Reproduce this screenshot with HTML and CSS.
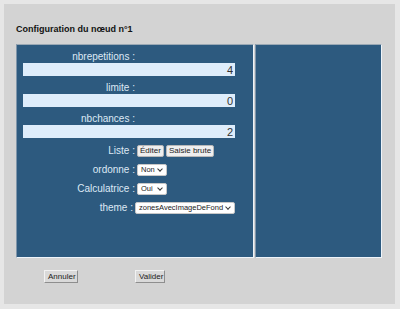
FILE: index.html
```html
<!DOCTYPE html>
<html lang="fr">
<head>
  <meta charset="UTF-8" />
  <title>Configuration du nœud n°1</title>
  <link rel="stylesheet" href="styles.css">
</head>
<body>
  <div class="window">
    <h1 class="title">Configuration du nœud n°1</h1>

    <div class="panels">
      <div class="panel panel-main">
        <div class="field">
          <label class="field-label" for="nbrepetitions">nbrepetitions :</label>
          <input class="num" type="text" id="nbrepetitions" value="4">
        </div>
        <div class="field">
          <label class="field-label" for="limite">limite :</label>
          <input class="num" type="text" id="limite" value="0">
        </div>
        <div class="field">
          <label class="field-label" for="nbchances">nbchances :</label>
          <input class="num" type="text" id="nbchances" value="2">
        </div>

        <div class="rows">
          <div class="row">
            <span class="row-label">Liste :</span>
            <button class="small-btn" type="button">Éditer</button>
            <button class="small-btn" type="button">Saisie brute</button>
          </div>
          <div class="row">
            <span class="row-label">ordonne :</span>
            <span class="select sel-short">Non <span class="chev"></span></span>
          </div>
          <div class="row">
            <span class="row-label">Calculatrice :</span>
            <span class="select sel-short">Oui <span class="chev"></span></span>
          </div>
          <div class="row">
            <span class="row-label">theme :</span>
            <span class="select sel-long">zonesAvecImageDeFond <span class="chev"></span></span>
          </div>
        </div>
      </div>
      <div class="panel panel-side"></div>
    </div>

    <div class="actions">
      <button class="action-btn btn-cancel" type="button">Annuler</button>
      <button class="action-btn btn-ok" type="button">Valider</button>
    </div>
  </div>
</body>
</html>
```

FILE: styles.css
```css
:root {
  --outer: #e6e6e6;
  --window: #d3d3d3;
  --blue: #2d5a7f;
  --label: #dde9f5;
  --input-bg: #deedfb;
  --font: 'Liberation Sans', Arial, sans-serif;
}
body {
  margin: 0;
  background: var(--outer);
  font-family: var(--font);
}
.window {
  margin: 4px;
  width: 391px;
  height: 300px;
  background: var(--window);
  box-sizing: border-box;
  padding: 19px 12px 0 12px;
}
.title {
  margin: 0 0 8px 0;
  font-size: 9px;
  line-height: 13px;
  font-weight: bold;
  color: #111;
}
.panels {
  display: flex;
  gap: 1px;
  height: 214px;
}
.panel {
  background: var(--blue);
  box-sizing: border-box;
  border: 1px solid;
  border-color: #9aa8b4 #eef4fa #eef4fa #7f95aa;
}
.panel-main {
  width: 238px;
  padding: 0 18px 0 6px;
}
.panel-side {
  width: 127px;
}
.field-label {
  display: block;
  width: 112px;
  text-align: right;
  color: var(--label);
  font-size: 10px;
  line-height: 13px;
  padding-top: 5px;
}
.num {
  display: block;
  width: 212px;
  height: 13px;
  box-sizing: border-box;
  margin: 0;
  border: 0;
  padding: 0 2px;
  background: var(--input-bg);
  text-align: right;
  font-family: var(--font);
  font-size: 11px;
  color: #333;
}
.rows {
  margin-top: 3px;
}
.row {
  display: flex;
  align-items: center;
  height: 19px;
}
.row-label {
  width: 112px;
  text-align: right;
  color: var(--label);
  font-size: 10px;
  margin-right: 2px;
}
.small-btn {
  height: 12px;
  padding: 0 2px;
  margin: 0 2px 0 0;
  font-family: var(--font);
  font-size: 8px;
  line-height: 10px;
  background: #efefef;
  color: #222;
  border: 1px solid #b8b8b8;
  border-radius: 2px;
}
.select {
  display: inline-flex;
  align-items: center;
  justify-content: space-between;
  box-sizing: border-box;
  height: 12px;
  padding: 0 3px;
  background: #fff;
  border: 1px solid #c7c7c7;
  border-radius: 2px;
  font-size: 7.5px;
  color: #222;
}
.sel-short {
  width: 30px;
}
.sel-long {
  width: 100px;
}
.chev {
  display: inline-block;
  width: 3px;
  height: 3px;
  border-right: 1px solid #333;
  border-bottom: 1px solid #333;
  transform: rotate(45deg);
  margin: 0 1px 2px 3px;
}
.actions {
  position: relative;
  height: 30px;
  margin-top: 11px;
}
.action-btn {
  position: absolute;
  top: 1px;
  height: 13px;
  padding: 0 3px;
  font-family: var(--font);
  font-size: 8px;
  color: #222;
  background: #d9d9d9;
  border: 1px solid;
  border-color: #f2f2f2 #8e8e8e #8e8e8e #f2f2f2;
}
.btn-cancel {
  left: 28px;
  width: 34px;
}
.btn-ok {
  left: 119px;
  width: 30px;
}
```
